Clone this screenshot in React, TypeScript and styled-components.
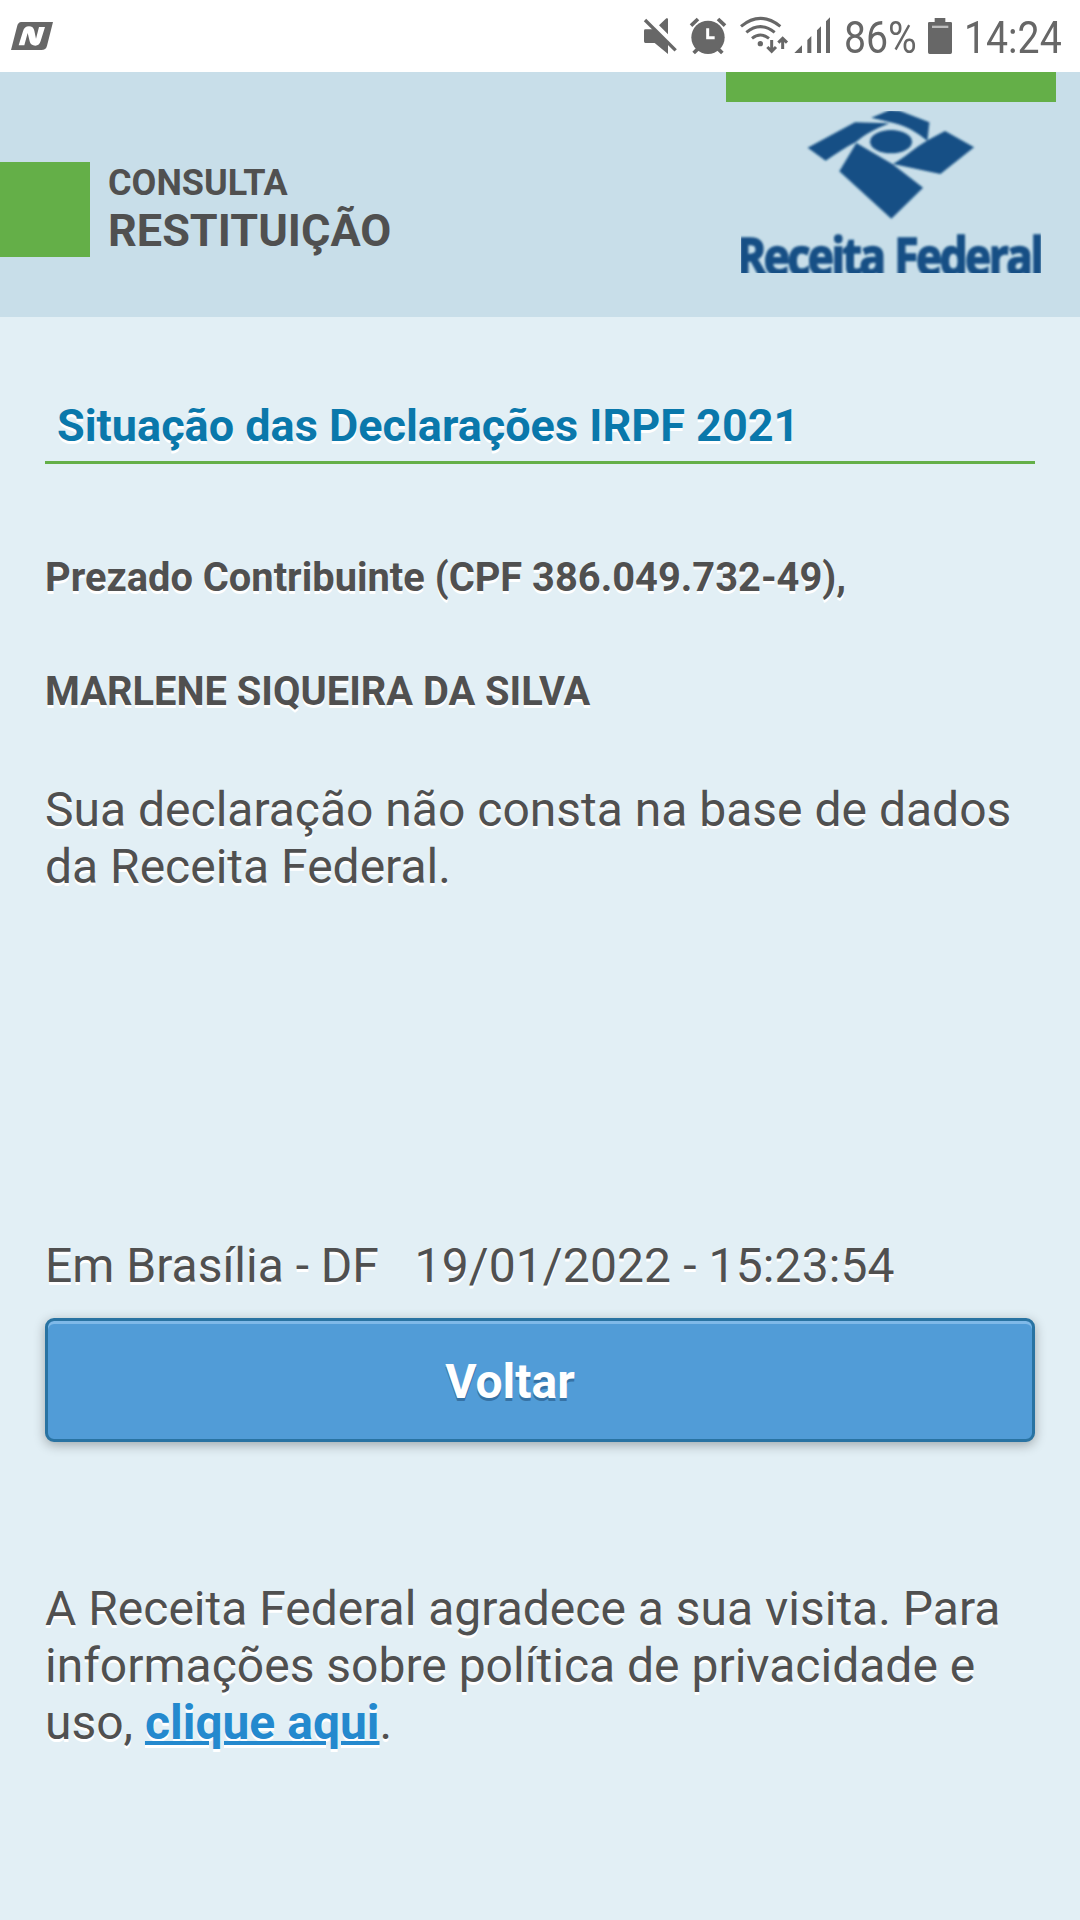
import React from "react";
import styled, { createGlobalStyle } from "styled-components";

const Global = createGlobalStyle`
  html, body { margin: 0; padding: 0; background: #e2eff5; }
  * { box-sizing: border-box; }
`;

const Page = styled.div`
  display: flex;
  flex-direction: column;
  width: 1080px;
  height: 1920px;
  overflow: hidden;
  background: #e2eff5;
  color: #505050;
  font-family: Roboto, "Liberation Sans", sans-serif;
`;

const StatusBar = styled.div`
  display: flex;
  justify-content: space-between;
  height: 72px;
  flex: none;
  background: #fff;
  color: #676767;
`;

const StatusGroup = styled.div`
  display: flex;
`;

const StatusSvg = styled.svg`
  display: block;
  flex: none;
  fill: #676767;
`;

const StatusText = styled.div<{ $width: number }>`
  width: ${(p) => p.$width}px;
  flex: none;
  font-size: 45px;
  line-height: 76px;
  white-space: nowrap;
  transform: scaleX(0.872);
  transform-origin: left center;
`;

const Header = styled.header`
  display: flex;
  justify-content: space-between;
  height: 245px;
  flex: none;
  padding-right: 24px;
  background: #c8dee9;
`;

const Brand = styled.div`
  display: flex;
  gap: 18px;
  padding-top: 90px;
`;

const GreenTab = styled.div`
  width: 90px;
  height: 95px;
  background: #64af48;
`;

const BrandText = styled.div`
  font-weight: 700;
`;

const Small = styled.div`
  font-size: 36px;
  line-height: 43px;
`;

const Large = styled.div`
  font-size: 45px;
  line-height: 52px;
`;

const LogoColumn = styled.div`
  display: flex;
  flex-direction: column;
  align-items: center;
  gap: 9px;
  width: 330px;
`;

const LogoBar = styled.div`
  width: 330px;
  height: 30px;
  background: #64af48;
`;

const Content = styled.main`
  display: flex;
  flex-direction: column;
  padding: 82px 45px 0;
  text-shadow: 0 3px 0 #fff;
`;

const Title = styled.h1`
  margin: 0;
  padding: 0 12px 8px;
  border-bottom: 3px solid #64af48;
  color: #0a78ab;
  font-size: 45px;
  line-height: 54px;
  font-weight: 700;
`;

const Strong = styled.p<{ $top: number }>`
  margin: ${(p) => p.$top}px 0 0;
  font-size: 39.84px;
  line-height: 48px;
  font-weight: 700;
`;

const Text = styled.p<{ $top: number }>`
  margin: ${(p) => p.$top}px 0 0;
  font-size: 48px;
  line-height: 57px;
  white-space: pre;
`;

const DateTime = styled.span`
  letter-spacing: 0.12px;
`;

const Button = styled.button`
  height: 124px;
  margin: 24px 0 0;
  padding: 2px 60px 0 0;
  border: 3px solid #2973a2;
  border-radius: 9px;
  background: #519cd7;
  box-shadow: inset 0 3px 0 #7fb9e8, 0 3px 12px rgba(0, 0, 0, 0.3);
  color: #fff;
  font: 700 48px Roboto, "Liberation Sans", sans-serif;
  text-shadow: 0 3px 0 #3572a5;
`;

const Link = styled.a`
  color: #2489ce;
  font-weight: 700;
  text-decoration: underline;
  text-decoration-thickness: 4px;
`;

const AppBadge = () => (
  <StatusSvg width="120" height="72" viewBox="0 0 360 216">
    <path d="M64 66H159L141 137Q138 150 124 150H33L51 80Q54 66 64 66Z" />
    <path
      d="M56 136L69 94Q73 79 87 79Q100 79 103 92L108 116L117 81H135L122 123Q118 137 106 137Q92 137 89 124L83 99L73 136Z"
      fill="#fff"
    />
  </StatusSvg>
);

const StatusIcons = () => (
  <StatusSvg width="214" height="72" viewBox="0 0 642 216">
    <path d="M46 88H70L114 132V162L74 129H46Q42 129 42 124V92Q42 88 46 88ZM87 76L109 55Q114 53 114 58V103Z" />
    <path d="M45 60L137 151" fill="none" stroke="#676767" strokeWidth="10" />
    <circle cx="234" cy="112" r="50" />
    <path
      d="M183 77L204 57M264 57L285 77M191 159L205 145M277 159L263 145"
      fill="none"
      stroke="#676767"
      strokeWidth="11"
    />
    <path d="M233 85V113H254" fill="none" stroke="#fff" strokeWidth="9" />
    <g fill="none" stroke="#676767" strokeWidth="9">
      <path d="M333 79Q391 31 451 79M349 97Q391 63 434 97M366 115Q391 95 417 115" />
      <path d="M425 120V153M412 141L425 154L438 141M458 147V114M445 128L458 115L471 128" />
    </g>
    <circle cx="391" cy="131" r="8" />
    <path d="M493 159L516 136V159ZM532 159V120L544 108V159ZM561 159V91L573 79V159ZM588 159V64L600 52V159Z" />
  </StatusSvg>
);

const Battery = () => (
  <StatusSvg width="40" height="72" viewBox="252 0 120 216">
    <path d="M284 54H316V66H332Q336 66 336 70V157Q336 162 331 162H269Q264 162 264 157V70Q264 66 268 66H284Z" />
    <path d="M276 77H325V84H276Z" fill="#bdbdbd" />
  </StatusSvg>
);

const LogoWord = styled.text`
  font-family: "Open Sans", "Noto Sans", sans-serif;
  font-size: 157px;
  font-weight: 700;
  letter-spacing: -9px;
  stroke: #144f85;
  stroke-width: 5px;
`;

const Logo = () => (
  <svg width="300" height="162" viewBox="63 153 900 486" fill="#144f85">
    <defs>
      <filter id="soft" x="-5%" y="-5%" width="110%" height="110%">
        <feGaussianBlur stdDeviation="3" />
      </filter>
    </defs>
    <g filter="url(#soft)">
      <path d="M263 263L405 187L508 190C464 207 434 224 407 247C376 262 346 283 317 302Z" />
      <path d="M454 173L510 150L540 153L628 187L622 243C590 216 559 199 524 190Z" />
      <ellipse cx="513" cy="245" rx="63" ry="35" />
      <path d="M409 249L518 313L609 383L514 476L358 334Z" />
      <path d="M519 312C560 288 585 263 624 240L675 213L762 262L661 342Z" />
      <LogoWord transform="translate(51 644) scale(0.85 1)">Receita</LogoWord>
      <LogoWord transform="translate(523 644) scale(0.845 1)">Federal</LogoWord>
    </g>
  </svg>
);

export default function App() {
  return (
    <Page>
      <Global />
      <StatusBar>
        <AppBadge />
        <StatusGroup>
          <StatusIcons />
          <StatusText $width={80}>86%</StatusText>
          <Battery />
          <StatusText $width={116}>14:24</StatusText>
        </StatusGroup>
      </StatusBar>
      <Header>
        <Brand>
          <GreenTab />
          <BrandText>
            <Small>CONSULTA</Small>
            <Large>RESTITUIÇÃO</Large>
          </BrandText>
        </Brand>
        <LogoColumn>
          <LogoBar />
          <Logo />
        </LogoColumn>
      </Header>
      <Content>
        <Title>Situação das Declarações IRPF 2021</Title>
        <Strong $top={90}>Prezado Contribuinte (CPF 386.049.732-49),</Strong>
        <Strong $top={66}>MARLENE SIQUEIRA DA SILVA</Strong>
        <Text $top={65}>{"Sua declaração não consta na base de dados\nda Receita Federal."}</Text>
        <Text $top={342}>
          {"Em Brasília - DF\u00a0\u00a0 "}
          <DateTime>19/01/2022 - 15:23:54</DateTime>
        </Text>
        <Button>Voltar</Button>
        <Text $top={138}>
          {"A Receita Federal agradece a sua visita. Para\ninformações sobre política de privacidade e\nuso, "}
          <Link>clique aqui</Link>.
        </Text>
      </Content>
    </Page>
  );
}
